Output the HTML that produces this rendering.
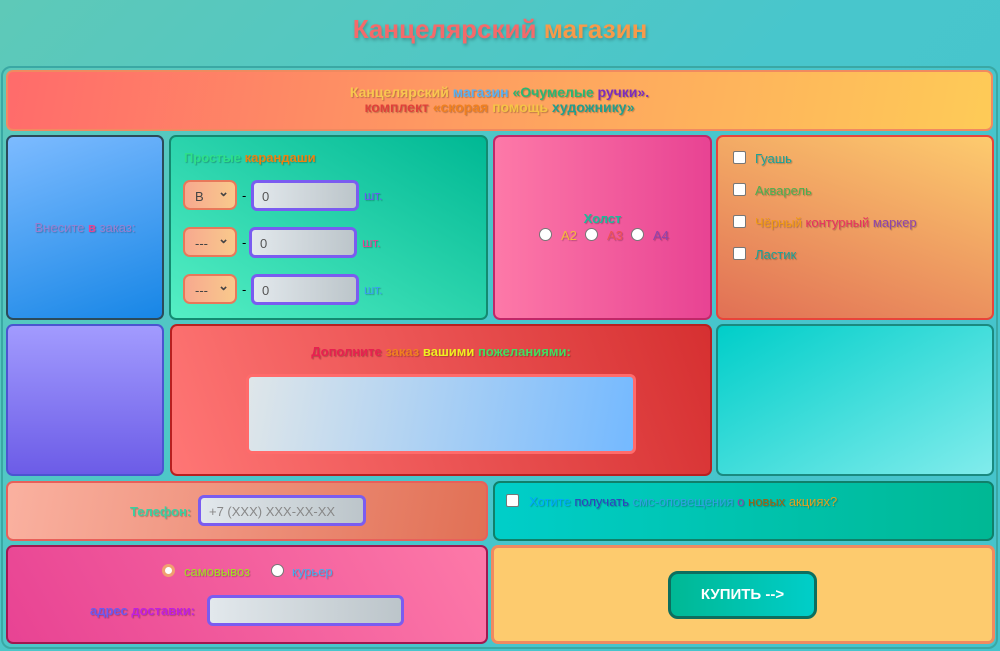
<!DOCTYPE html>
<html><head><meta charset="utf-8"><style>
*{box-sizing:border-box;margin:0;padding:0}
body{width:1000px;height:651px;overflow:hidden;background:linear-gradient(135deg,#5ec9b8,#48c6cc 50%,#45c3cc);font-family:"Liberation Sans",sans-serif;font-size:13px;position:relative}
.a{position:absolute}
.b{position:absolute;border-radius:7px;border:2px solid}
h1{position:absolute;left:0;width:1000px;top:14px;text-align:center;font-size:26px;font-weight:bold;text-shadow:1px 2px 3px rgba(0,0,0,.25)}
.sh{text-shadow:1px 1px 1px rgba(0,0,0,.25)}
.sel{position:absolute;width:54px;height:30px;border:2px solid #e8785a;border-radius:7px;background:linear-gradient(90deg,#f7a98f,#f9c98c);padding:7px 10px;font-size:13px;color:#444}
.sel:after{content:"⌄";position:absolute;right:6px;top:2px;font-weight:bold}
.inp{position:absolute;border:3px solid #7a5cf0;border-radius:6px;background:linear-gradient(90deg,#e2e8ec,#bcc5ca);padding:6px 8px;color:#555}
.cb{position:absolute;width:13px;height:13px;background:#fff;border:1px solid #777;border-radius:2px}
.rd{position:absolute;width:13px;height:13px;background:#fff;border:1px solid #777;border-radius:50%}
</style></head><body>
<h1><span style="color:#f46a6a">Канцелярский</span> <span style="color:#f79a4a">магазин</span></h1>
<div class="b" style="left:1px;top:66px;width:997px;height:583px;border-color:#3aa8a4;border-radius:10px"></div>
<div class="b" style="left:6px;top:70px;width:987px;height:61px;border-color:#f08a60;background:linear-gradient(100deg,#ff6b6b,#fea060 50%,#fecb57)"></div>
<div class="a sh" style="left:6px;top:85px;width:987px;text-align:center;font-weight:bold;line-height:15px;font-size:14px"><span style="color:#f9c74f">Канцелярский</span> <span style="color:#5ab0f0">магазин</span> <span style="color:#2bb673">«Очумелые</span> <span style="color:#7b2cbf">ручки».</span><br><span style="color:#e0403a">комплект</span> <span style="color:#f08020">«скорая</span> <span style="color:#f6c445">помощь</span> <span style="color:#229e8e">художнику»</span></div>

<div class="b" style="left:6px;top:135px;width:158px;height:185px;border-color:#2b4a5a;background:linear-gradient(160deg,#7dbbff,#1786e6)"></div>
<div class="a sh" style="left:6px;top:220px;width:158px;text-align:center;color:#9a7fd0">Внесите <b style="color:#e84393">в</b> заказ:</div>

<div class="b" style="left:169px;top:135px;width:319px;height:185px;border-color:#138a70;background:linear-gradient(30deg,#55efc4,#00b894)"></div>
<div class="a sh" style="left:184px;top:150px;font-weight:bold"><span style="color:#2ee08a">Простые</span> <span style="color:#f08010">карандаши</span></div>
<div class="sel" style="left:183px;top:180px">B</div><div class="a" style="left:242px;top:188px">-</div><div class="inp" style="left:251px;top:180px;width:108px;height:31px">0</div><div class="a sh" style="left:364px;top:188px;color:#6a5af0">шт.</div>
<div class="sel" style="left:183px;top:227px">---</div><div class="a" style="left:242px;top:235px">-</div><div class="inp" style="left:249px;top:227px;width:108px;height:31px">0</div><div class="a sh" style="left:362px;top:235px;color:#e84393">шт.</div>
<div class="sel" style="left:183px;top:274px">---</div><div class="a" style="left:242px;top:282px">-</div><div class="inp" style="left:251px;top:274px;width:108px;height:31px">0</div><div class="a sh" style="left:364px;top:282px;color:#3aa0f0">шт.</div>

<div class="b" style="left:493px;top:135px;width:219px;height:185px;border-color:#c02868;background:linear-gradient(90deg,#fd79a8,#e84393)"></div>
<div class="a sh" style="left:493px;top:211px;width:219px;text-align:center;font-weight:bold;color:#1abc9c">Холст</div>
<div class="rd" style="left:539px;top:228px"></div><div class="a sh" style="left:561px;top:228px;color:#f6b93b">A2</div>
<div class="rd" style="left:585px;top:228px"></div><div class="a sh" style="left:607px;top:228px;color:#ee5253">A3</div>
<div class="rd" style="left:631px;top:228px"></div><div class="a sh" style="left:653px;top:228px;color:#8e44ad">A4</div>

<div class="b" style="left:716px;top:135px;width:278px;height:185px;border-color:#e8443a;background:linear-gradient(20deg,#e17055,#fdcb6e)"></div>
<div class="cb" style="left:733px;top:151px"></div><div class="a sh" style="left:755px;top:151px;color:#17a39a">Гуашь</div>
<div class="cb" style="left:733px;top:183px"></div><div class="a sh" style="left:755px;top:183px;color:#4caf50">Акварель</div>
<div class="cb" style="left:733px;top:215px"></div><div class="a sh" style="left:755px;top:215px"><span style="color:#f39c12">Чёрный</span> <span style="color:#e83060">контурный</span> <span style="color:#8e44ad">маркер</span></div>
<div class="cb" style="left:733px;top:247px"></div><div class="a sh" style="left:755px;top:247px;color:#17a39a">Ластик</div>

<div class="b" style="left:6px;top:324px;width:158px;height:152px;border-color:#4a55d0;background:linear-gradient(180deg,#a29bfe,#6c5ce7)"></div>
<div class="b" style="left:170px;top:324px;width:542px;height:152px;border-color:#b82020;background:linear-gradient(70deg,#ff7675,#d63031)"></div>
<div class="a sh" style="left:170px;top:344px;width:542px;text-align:center;font-weight:bold"><span style="color:#e82050">Дополните</span> <span style="color:#f08020">заказ</span> <span style="color:#f0f020">вашими</span> <span style="color:#40e060">пожеланиями:</span></div>
<div class="a" style="left:246px;top:374px;width:390px;height:80px;border:3px solid #ff6b6b;border-radius:6px;background:linear-gradient(100deg,#dfe6e9,#74b9ff)"></div>
<div class="b" style="left:716px;top:324px;width:278px;height:152px;border-color:#1a8a80;background:linear-gradient(150deg,#00cec9,#81ecec)"></div>

<div class="b" style="left:6px;top:481px;width:482px;height:60px;border-color:#e8605a;background:linear-gradient(100deg,#fab1a0,#e17055)"></div>
<div class="a sh" style="left:130px;top:504px;font-weight:bold;color:#3ad0a0">Телефон:</div>
<div class="inp" style="left:198px;top:495px;width:168px;height:31px;color:#888">+7 (XXX) XXX-XX-XX</div>
<div class="b" style="left:493px;top:481px;width:501px;height:60px;border-color:#10806a;background:linear-gradient(90deg,#00cec9,#00b894)"></div>
<div class="cb" style="left:506px;top:494px"></div>
<div class="a sh" style="left:529px;top:494px"><span style="color:#00a8ff">Хотите</span> <span style="color:#3040c0">получать</span> <span style="color:#30a0e0">смс-оповещения</span> <span style="color:#8e44ad">о</span> <span style="color:#a06010">новых</span> <span style="color:#e0a020">акциях?</span></div>

<div class="b" style="left:6px;top:545px;width:482px;height:99px;border-color:#a01850;background:linear-gradient(60deg,#e84393,#fd79a8)"></div>
<div class="rd" style="left:162px;top:564px;border:3px solid #f0a070"></div><div class="a sh" style="left:184px;top:564px;color:#a0e020">самовывоз</div>
<div class="rd" style="left:271px;top:564px"></div><div class="a sh" style="left:292px;top:564px;color:#40b0f0">курьер</div>
<div class="a sh" style="left:90px;top:603px;font-weight:bold"><span style="color:#6a5af0">адрес</span> <span style="color:#c020e0">доставки:</span></div>
<div class="inp" style="left:207px;top:595px;width:197px;height:31px"></div>
<div class="b" style="left:491px;top:545px;width:504px;height:99px;border-color:#f08a60;border-width:3px;background:#fdcb6e"></div>
<div class="a" style="left:668px;top:571px;width:149px;height:48px;border:3px solid #0d6e5e;border-radius:10px;background:linear-gradient(90deg,#00b894,#00cec9);color:#fff;font-weight:bold;font-size:15px;text-align:center;line-height:42px">КУПИТЬ --&gt;</div>
</body></html>
